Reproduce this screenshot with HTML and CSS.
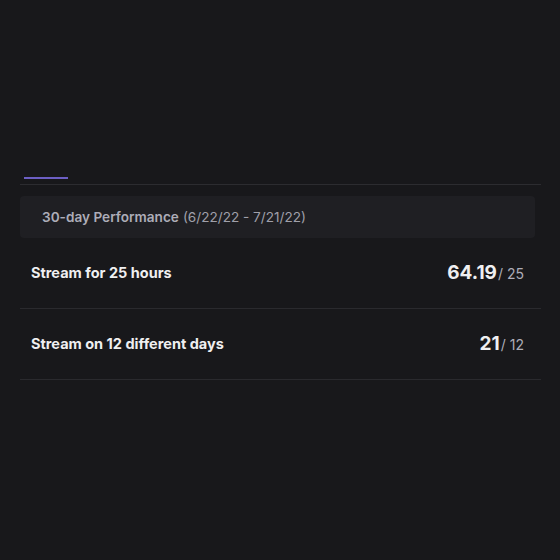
FILE: index.html
```html
<!DOCTYPE html>
<html>
<head>
<meta charset="utf-8">
<link rel="stylesheet" href="styles.css">
</head>
<body>
<div class="page">
  <div class="tabs">
    <div class="tab-indicator"></div>
  </div>
  <div class="panel-head">
    <span class="head-title">30-day Performance</span>
    <span class="head-date">(6/22/22 - 7/21/22)</span>
  </div>
  <div class="row">
    <span class="label">Stream for 25 hours</span>
    <span class="value"><span class="big">64.19</span><span class="goal">/ 25</span></span>
  </div>
  <div class="row">
    <span class="label">Stream on 12 different days</span>
    <span class="value"><span class="big">21</span><span class="goal">/ 12</span></span>
  </div>
</div>
</body>
</html>
```
FILE: styles.css
```css
html, body {
  margin: 0;
  padding: 0;
  background: #18181b;
  font-family: Inter, "Noto Sans", sans-serif;
  color: #efeff1;
}
.page {
  width: 521px;
  margin-left: 20px;
}
.tabs {
  height: 184px;
  border-bottom: 1px solid #2c2c30;
  display: flex;
  flex-direction: column;
  justify-content: flex-start;
}
.tab-indicator {
  margin-top: 177px;
  margin-left: 4px;
  width: 44px;
  height: 2px;
  background: #6c5fc4;
}
.panel-head {
  margin-top: 11px;
  width: 493px;
  height: 42px;
  padding-left: 22px;
  background: #1f1f23;
  border-radius: 4px;
  display: flex;
  align-items: center;
  gap: 4px;
  font-size: 13.6px;
  color: #adadb8;
}
.head-title {
  font-weight: 600;
}
.head-date {
  font-weight: 400;
  color: #a0a0aa;
}
.row {
  height: 68px;
  border-bottom: 1px solid #2a2a2e;
  display: flex;
  align-items: center;
  justify-content: space-between;
  padding: 0 17px 2px 11px;
}
.label {
  font-size: 14.5px;
  font-weight: 700;
  color: #efeff1;
}
.value {
  display: flex;
  align-items: baseline;
}
.big {
  font-size: 19px;
  font-weight: 700;
  color: #efeff1;
}
.goal {
  font-size: 14px;
  color: #adadb8;
  margin-left: 1px;
}
```
